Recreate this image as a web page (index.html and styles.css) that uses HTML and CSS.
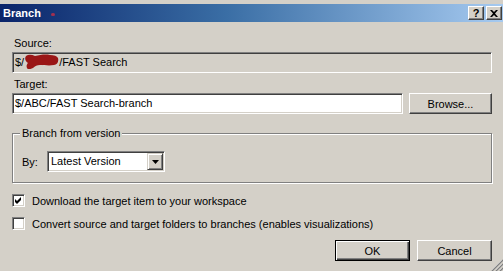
FILE: index.html
```html
<!DOCTYPE html>
<html lang="en">
<head>
    <meta charset="UTF-8">
    <title>Branch</title>
    <link rel="stylesheet" href="styles.css">
</head>
<body>
    <div class="window">
        <div class="titlebar">
            <span class="title">Branch</span>
            <span class="smudge"></span>
            <div class="caption-buttons">
                <span class="cbtn help">?</span>
                <span class="cbtn close">
                    <svg width="8" height="7" viewBox="0 0 8 7"><path d="M0 0h2l2 2 2-2h2L5 3.5 8 7H6L4 5 2 7H0l3-3.5z" fill="#000"/></svg>
                </span>
            </div>
        </div>

        <div class="content">
            <div class="label first">Source:</div>
            <div class="field readonly">$/<span class="redact"><svg width="36" height="15" viewBox="0 0 36 15"><path d="M3 2c3-2 6-1 9 0 5-1 10-2 15-1 4 0 7 1 8 3 1 4-1 7-4 7-5 1-10 0-14 0-3 0-5 1-7 3-2 1-5 2-6 0-1-2 0-4 1-5-2-1-4-4-2-7z" fill="#9a1616"/></svg></span>/FAST Search</div>

            <div class="label">Target:</div>
            <div class="target-row">
                <div class="field">$/ABC/FAST Search-branch</div>
                <button type="button" class="btn browse">Browse...</button>
            </div>

            <fieldset class="group">
                <legend>Branch from version</legend>
                <div class="by-row">
                    <span class="by-label">By:</span>
                    <div class="combo">
                        <span class="combo-text">Latest Version</span>
                        <span class="combo-arrow">
                            <svg width="7" height="4" viewBox="0 0 7 4"><path d="M0 0h7L3.5 4z" fill="#000"/></svg>
                        </span>
                    </div>
                </div>
            </fieldset>

            <div class="check-row first-check">
                <span class="checkbox">
                    <svg width="9" height="9" viewBox="0 0 9 9"><path d="M1 3l2 2 4-4v3L3 8 1 6z" fill="#000"/></svg>
                </span>
                Download the target item to your workspace
            </div>
            <div class="check-row">
                <span class="checkbox"></span>
                Convert source and target folders to branches (enables visualizations)
            </div>

            <div class="buttons">
                <button type="button" class="btn default">OK</button>
                <button type="button" class="btn">Cancel</button>
            </div>
        </div>

        <div class="grip">
            <svg width="12" height="12" viewBox="0 0 12 12">
                <path d="M11 1L1 11M11 5L5 11M11 9L9 11" stroke="#fff" stroke-width="1"/>
                <path d="M12 1L1 12M12 5L5 12M12 9L9 12" stroke="#808080" stroke-width="1.4"/>
            </svg>
        </div>
    </div>
</body>
</html>
```

FILE: styles.css
```css
body{
    margin: 0;
    background-color: #d4d0c8;
}
body *{
    font-family: "Liberation Sans", Arial, sans-serif;
    font-size: 11px;
}
div.window{
    position: relative;
    width: 503px;
    height: 271px;
    padding-top: 4px;
    box-sizing: border-box;
    overflow: hidden;
}

/* title bar */
div.titlebar{
    height: 18px;
    display: flex;
    align-items: center;
    padding-left: 3px;
    background: linear-gradient(to right, #0a246a, #3a6ea5 45%, #a6caf0);
}
div.titlebar span.title{
    color: white;
    font-weight: bold;
}
div.titlebar span.smudge{
    width: 4px;
    height: 3px;
    margin-left: 10px;
    margin-top: 2px;
    border-radius: 2px;
    background-color: #a03050;
}
div.titlebar div.caption-buttons{
    margin-left: auto;
    display: flex;
    gap: 2px;
    margin-right: 1px;
}
span.cbtn{
    width: 16px;
    height: 14px;
    box-sizing: border-box;
    display: flex;
    align-items: center;
    justify-content: center;
    background-color: #d4d0c8;
    border: 1px solid;
    border-color: #fff #404040 #404040 #fff;
    box-shadow: inset -1px -1px 0 #808080;
}
span.cbtn.help{
    font-weight: bold;
    font-size: 11px;
    line-height: 12px;
    color: black;
}

/* content */
div.content{
    padding: 0 11px 0 12px;
}
div.label{
    line-height: 13px;
    height: 13px;
    margin-top: 5px;
    margin-bottom: 2px;
    padding-left: 2px;
    color: black;
}
div.label.first{
    margin-top: 15px;
}
div.field{
    height: 21px;
    box-sizing: border-box;
    line-height: 19px;
    padding-left: 2px;
    background-color: white;
    border: 1px solid;
    border-color: #808080 #fff #fff #808080;
    box-shadow: inset 1px 1px 0 #404040, inset -1px -1px 0 #d4d0c8;
    white-space: nowrap;
}
div.field.readonly{
    background-color: #d4d0c8;
}
span.redact{
    display: inline-block;
    vertical-align: top;
    width: 36px;
    height: 15px;
    margin: 1px 0 0 -1px;
}
div.target-row{
    display: flex;
    gap: 6px;
}
div.target-row div.field{
    flex: 1;
}

/* buttons */
button.btn{
    width: 75px;
    height: 21px;
    padding: 0;
    color: black;
    background-color: #d4d0c8;
    border: 1px solid;
    border-color: #fff #404040 #404040 #fff;
    box-shadow: inset -1px -1px 0 #808080;
}
button.btn.browse{
    width: 83px;
}
button.btn.default{
    border-color: #000;
    box-shadow: inset 1px 1px 0 #fff, inset -1px -1px 0 #404040, inset -2px -2px 0 #808080;
}

/* group box */
fieldset.group{
    margin: 13px 0 0 0;
    padding: 11px 9px 10px 9px;
    border: 1px solid #808080;
    box-shadow: inset 1px 1px 0 #fff, 1px 1px 0 #fff;
}
fieldset.group legend{
    padding: 0 2px;
    margin-left: -2px;
    line-height: 13px;
    background-color: #d4d0c8;
}
div.by-row{
    display: flex;
    align-items: center;
}
span.by-label{
    width: 25px;
}
div.combo{
    width: 118px;
    height: 21px;
    box-sizing: border-box;
    display: flex;
    align-items: stretch;
    background-color: white;
    border: 1px solid;
    border-color: #808080 #fff #fff #808080;
    box-shadow: inset 1px 1px 0 #404040, inset -1px -1px 0 #d4d0c8;
    padding: 1px;
}
span.combo-text{
    flex: 1;
    line-height: 17px;
    padding-left: 2px;
}
span.combo-arrow{
    width: 16px;
    box-sizing: border-box;
    display: flex;
    align-items: center;
    justify-content: center;
    background-color: #d4d0c8;
    border: 1px solid;
    border-color: #d4d0c8 #404040 #404040 #d4d0c8;
    box-shadow: inset 1px 1px 0 #fff, inset -1px -1px 0 #808080;
}

/* checkboxes */
div.check-row{
    display: flex;
    align-items: center;
    height: 13px;
    margin-top: 10px;
}
div.check-row.first-check{
    margin-top: 11px;
}
span.checkbox{
    width: 13px;
    height: 13px;
    box-sizing: border-box;
    margin-right: 7px;
    display: flex;
    align-items: center;
    justify-content: center;
    background-color: white;
    border: 1px solid;
    border-color: #808080 #fff #fff #808080;
    box-shadow: inset 1px 1px 0 #404040, inset -1px -1px 0 #d4d0c8;
}

div.buttons{
    display: flex;
    justify-content: flex-end;
    gap: 7px;
    margin-top: 10px;
}

div.grip{
    position: absolute;
    right: 0;
    bottom: 0;
    width: 12px;
    height: 12px;
}
```
